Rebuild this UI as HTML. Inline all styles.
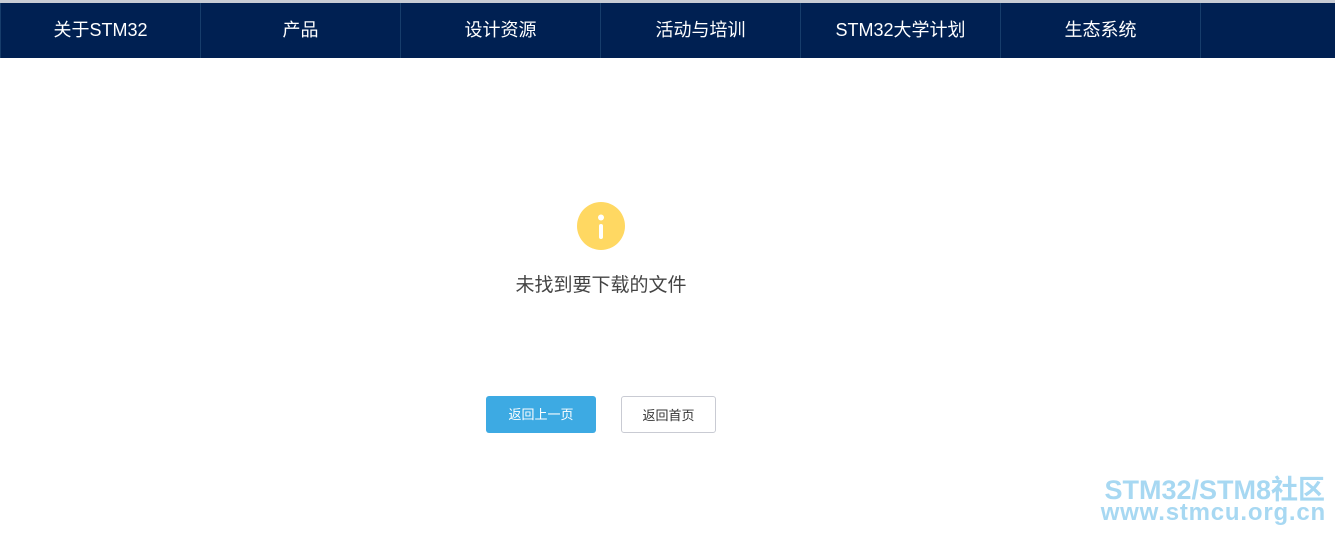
<!DOCTYPE html>
<html><head><meta charset="utf-8"><style>
body{margin:0;width:1335px;height:535px;background:#fff;position:relative;overflow:hidden;font-family:"Liberation Sans","Noto Sans CJK SC",sans-serif}
.top{position:absolute;left:0;top:0;width:1335px;height:3px;background:#c8ccd4}
.nav{position:absolute;left:0;top:3px;width:1335px;height:55px;background:#002052}
.nav div{position:absolute;top:0;width:199px;height:55px;border-left:1px solid #173d6b;color:#fff;font-size:18px;line-height:55px;text-align:center}
.ic{position:absolute;left:577px;top:202px;width:48px;height:48px;border-radius:50%;background:#ffd862}
.msg{position:absolute;left:480px;top:270px;width:242px;text-align:center;font-size:19px;color:#444}
.b{position:absolute;top:396px;height:37px;line-height:37px;text-align:center;font-size:13px;border-radius:3px;box-sizing:border-box}
.wm{position:absolute;right:10px;color:#a7d8f2;font-weight:bold;text-align:right;white-space:nowrap}
</style></head><body>
<div class="top"></div>
<div class="nav">
<div style="left:0">关于STM32</div><div style="left:200px">产品</div><div style="left:400px">设计资源</div><div style="left:600px">活动与培训</div><div style="left:800px">STM32大学计划</div><div style="left:1000px">生态系统</div><div style="left:1200px;width:135px"></div>
</div>
<div class="ic"><svg width="48" height="48"><circle cx="24" cy="15.5" r="3" fill="#fff"/><rect x="22" y="22" width="4" height="15" rx="2" fill="#fff"/></svg></div>
<div class="msg">未找到要下载的文件</div>
<div class="b" style="left:486px;width:110px;background:#3daae3;color:#fff">返回上一页</div>
<div class="b" style="left:621px;width:95px;border:1px solid #c9cbd3;color:#333">返回首页</div>
<div class="wm" style="top:474px;font-size:27px;line-height:32px">STM32/STM8社区</div>
<div class="wm" style="top:499px;font-size:24px;line-height:28px;letter-spacing:0.8px;right:9px">www.stmcu.org.cn</div>
</body></html>
